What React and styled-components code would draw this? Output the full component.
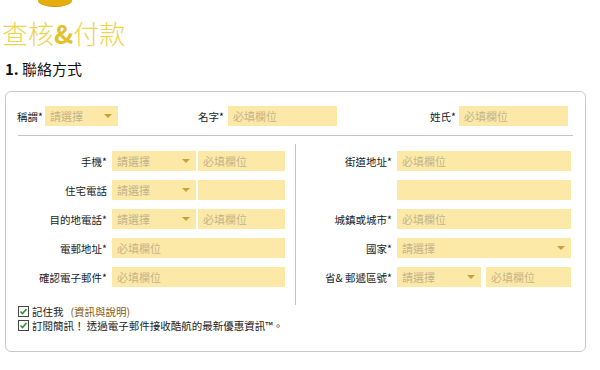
import React from 'react';
import styled, { createGlobalStyle } from 'styled-components';

const Global = createGlobalStyle`
  body {
    margin: 0;
    background: #fff;
    font-family: "Noto Sans CJK TC", "Liberation Sans", sans-serif;
    color: #222;
  }
`;

const Page = styled.div`
  width: 600px;
  height: 370px;
  overflow: hidden;
  padding: 0 0 0 5px;
  box-sizing: border-box;
`;

const Coin = styled.div`
  width: 34px;
  height: 12px;
  margin: -6px 0 0 33px;
  border-radius: 50%;
  background: #e5ae0c;
  border-bottom: 1px solid #c68e00;
`;

const Title = styled.h1`
  margin: 11px 0 0 -3px;
  font-size: 26px;
  line-height: 30px;
  font-weight: 300;
  color: #eed34c;

  b {
    color: #e4c02a;
    font-weight: 700;
  }
`;

const Section = styled.h2`
  margin: 11px 0 0 0;
  font-size: 15px;
  line-height: 20px;
  font-weight: 400;
  color: #111;

  b {
    font-weight: 700;
  }
`;

const Card = styled.div`
  margin-top: 12px;
  width: 581px;
  height: 261px;
  box-sizing: border-box;
  border: 1px solid #c9c9c9;
  border-radius: 6px;
  padding: 14px 15px 0 11px;
`;

const TopRow = styled.div`
  display: grid;
  grid-template-columns: 181px 232px 1fr;
  height: 20px;
`;

const Field = styled.div`
  display: flex;
  align-items: center;
  gap: ${p => p.$gap || 3}px;
`;

const Label = styled.span`
  font-size: 10.5px;
  color: #1a1a1a;
  white-space: nowrap;
  text-align: right;
  width: ${p => (p.$w ? `${p.$w}px` : 'auto')};
  flex-shrink: 0;
`;

const Input = styled.div`
  width: ${p => p.$w}px;
  height: 20px;
  margin-left: ${p => p.$ml || 0}px;
  background: #fce9a8;
  font-size: 11px;
  line-height: 20px;
  color: #c3b38b;
  padding-left: 5px;
  box-sizing: border-box;
  flex-shrink: 0;
`;

const Select = styled(Input)`
  display: flex;
  align-items: center;
  justify-content: space-between;
  padding-right: 6px;

  &::after {
    content: '';
    border-left: 4px solid transparent;
    border-right: 4px solid transparent;
    border-top: 4px solid #c9a136;
  }
`;

const Rule = styled.div`
  height: 1px;
  background: #c4c4c4;
  margin: 9px 0 0 1px;
  width: 555px;
`;

const Columns = styled.div`
  display: grid;
  grid-template-columns: 278px 1px 1fr;
  margin-top: 8px;
`;

const Column = styled.div`
  display: flex;
  flex-direction: column;
  gap: 9px;
  padding: 7px 0 18px 0;
`;

const VLine = styled.div`
  background: #c4c4c4;
`;

const Row = styled.div`
  display: flex;
  align-items: center;
  gap: 2px;
  height: 20px;

  ${Label} {
    margin-right: 3px;
  }
`;

const Checks = styled.div`
  display: flex;
  flex-direction: column;
  gap: 3px;
  margin-top: 1px;
  padding-left: 1px;
`;

const Check = styled.div`
  display: flex;
  align-items: center;
  gap: 3px;
  font-size: 10.5px;
  line-height: 11px;
  color: #1a1a1a;

  em {
    font-style: normal;
    color: #8a5a10;
    margin-left: 4px;
  }
`;

const Box = () => (
  <svg width="11" height="11" viewBox="0 0 11 11">
    <rect x="0.5" y="0.5" width="10" height="10" fill="#fff" stroke="#444" />
    <path d="M2.5 5.5 L4.5 7.5 L8.5 3" fill="none" stroke="#2f8f2f" strokeWidth="1.6" />
  </svg>
);

const REQ = '必填欄位';
const PICK = '請選擇';

export default function App() {
  return (
    <Page>
      <Global />
      <Coin />
      <Title>查核<b>&amp;</b>付款</Title>
      <Section><b>1.</b> 聯絡方式</Section>
      <Card>
        <TopRow>
          <Field $gap={2}>
            <Label>稱謂*</Label>
            <Select $w={73}>{PICK}</Select>
          </Field>
          <Field $gap={4}>
            <Label>名字*</Label>
            <Input $w={109}>{REQ}</Input>
          </Field>
          <Field $gap={3}>
            <Label>姓氏*</Label>
            <Input $w={109}>{REQ}</Input>
          </Field>
        </TopRow>
        <Rule />
        <Columns>
          <Column>
            <Row>
              <Label $w={90}>手機*</Label>
              <Select $w={84}>{PICK}</Select>
              <Input $w={87}>{REQ}</Input>
            </Row>
            <Row>
              <Label $w={90}>住宅電話</Label>
              <Select $w={84}>{PICK}</Select>
              <Input $w={87} />
            </Row>
            <Row>
              <Label $w={90}>目的地電話*</Label>
              <Select $w={84}>{PICK}</Select>
              <Input $w={87}>{REQ}</Input>
            </Row>
            <Row>
              <Label $w={90}>電郵地址*</Label>
              <Input $w={173}>{REQ}</Input>
            </Row>
            <Row>
              <Label $w={90}>確認電子郵件*</Label>
              <Input $w={173}>{REQ}</Input>
            </Row>
          </Column>
          <VLine />
          <Column>
            <Row>
              <Label $w={96}>街道地址*</Label>
              <Input $w={174}>{REQ}</Input>
            </Row>
            <Row>
              <Label $w={96} />
              <Input $w={174} />
            </Row>
            <Row>
              <Label $w={96}>城鎮或城市*</Label>
              <Input $w={174}>{REQ}</Input>
            </Row>
            <Row>
              <Label $w={96}>國家*</Label>
              <Select $w={174}>{PICK}</Select>
            </Row>
            <Row>
              <Label $w={96}>省&amp; 郵遞區號*</Label>
              <Select $w={84}>{PICK}</Select>
              <Input $w={85} $ml={3}>{REQ}</Input>
            </Row>
          </Column>
        </Columns>
        <Checks>
          <Check><Box />記住我<em>(資訊與說明)</em></Check>
          <Check><Box />訂閱簡訊！ 透過電子郵件接收酷航的最新優惠資訊™。</Check>
        </Checks>
      </Card>
    </Page>
  );
}
